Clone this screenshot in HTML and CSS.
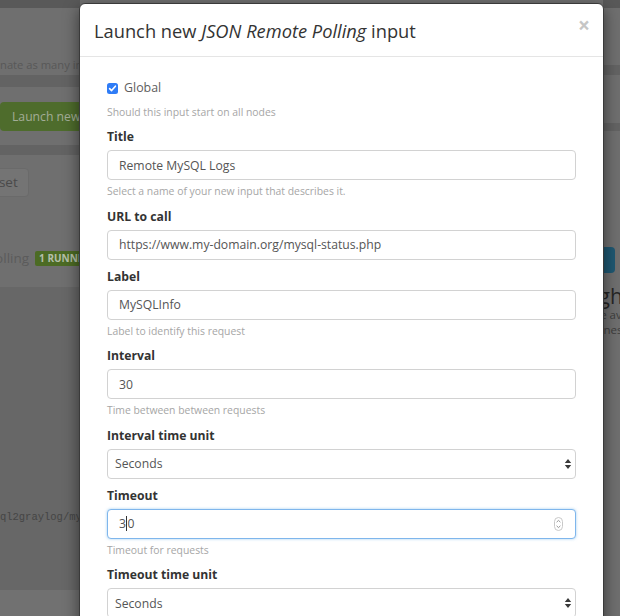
FILE: index.html
```html
<!DOCTYPE html>
<html lang="en">
<head>
<meta charset="utf-8">
<title>Inputs</title>
<link rel="stylesheet" href="styles.css">
</head>
<body>
<div class="page">
  <div class="col-left">
    <div class="nav"></div>
    <div class="box box-intro"><p class="intro-text">terminate as many inputs as you want here.</p></div>
    <div class="gap gap-a"></div>
    <div class="box box-launch"><span class="btn-green">Launch new input</span></div>
    <div class="gap gap-b"></div>
    <div class="box box-list">
      <span class="btn-reset">Reset</span>
      <div class="input-row"><span class="input-name">Polling</span><span class="badge">1 RUNNING</span></div>
    </div>
    <div class="well"><code class="cfg">mysql2graylog/mysql</code></div>
    <div class="foot"></div>
  </div>
  <div class="col-mid"></div>
  <div class="col-right">
    <div class="nav"></div>
    <div class="box box-r1"></div>
    <div class="gap gap-r1"></div>
    <div class="box box-r2"></div>
    <div class="gap gap-r2"></div>
    <div class="box box-r3">
      <span class="btn-blue">Go</span>
      <p class="r-title">Through</p>
      <p class="r-text">the average</p>
      <p class="r-text r-text2">business</p>
    </div>
  </div>
</div>

<div class="modal">
  <div class="modal-header">
    <h2 class="modal-title">Launch new <em>JSON Remote Polling</em> input</h2>
    <span class="close">&times;</span>
  </div>
  <div class="modal-body">
    <div class="check-row">
      <span class="check-box"><svg width="11" height="11" viewBox="0 0 11 11"><path d="M2.6 5.6 L4.6 7.6 L8.4 3.2" fill="none" stroke="#fff" stroke-width="1.6" stroke-linecap="round" stroke-linejoin="round"/></svg></span>
      <span class="check-label">Global</span>
    </div>
    <p class="help help-check">Should this input start on all nodes</p>

    <div class="group">
      <label class="lbl">Title</label>
      <div class="ctl">Remote MySQL Logs</div>
      <p class="help">Select a name of your new input that describes it.</p>
    </div>

    <div class="group">
      <label class="lbl">URL to call</label>
      <div class="ctl">https://www.my-domain.org/mysql-status.php</div>
    </div>

    <div class="group">
      <label class="lbl">Label</label>
      <div class="ctl">MySQLInfo</div>
      <p class="help">Label to identify this request</p>
    </div>

    <div class="group">
      <label class="lbl">Interval</label>
      <div class="ctl">30</div>
      <p class="help">Time between between requests</p>
    </div>

    <div class="group">
      <label class="lbl">Interval time unit</label>
      <div class="ctl ctl-select"><span>Seconds</span>
        <svg class="sel-arrow" width="8" height="12" viewBox="0 0 8 12"><path d="M0.8 5 L4 1 L7.2 5 Z M0.8 7 L4 11 L7.2 7 Z" fill="#3a3a3a"/></svg>
      </div>
    </div>

    <div class="group">
      <label class="lbl">Timeout</label>
      <div class="ctl ctl-focus"><span>3</span><span class="caret"></span><span>0</span>
        <svg class="spin" width="9" height="14" viewBox="0 0 9 14"><rect x="0.5" y="0.5" width="8" height="13" rx="4" fill="#fff" stroke="#c8c8c8"/><path d="M2.6 5.2 L4.5 3.4 L6.4 5.2 M2.6 8.8 L4.5 10.6 L6.4 8.8" fill="none" stroke="#8a8a8a" stroke-width="0.9"/></svg>
      </div>
      <p class="help">Timeout for requests</p>
    </div>

    <div class="group">
      <label class="lbl">Timeout time unit</label>
      <div class="ctl ctl-select"><span>Seconds</span>
        <svg class="sel-arrow" width="8" height="12" viewBox="0 0 8 12"><path d="M0.8 5 L4 1 L7.2 5 Z M0.8 7 L4 11 L7.2 7 Z" fill="#3a3a3a"/></svg>
      </div>
    </div>
  </div>
</div>
</body>
</html>
```

FILE: styles.css
```css
* { box-sizing: border-box; }
html, body { margin: 0; padding: 0; }
body {
  width: 620px;
  height: 616px;
  overflow: hidden;
  position: relative;
  background: #6f6f6f;
  font-family: "Open Sans", "DejaVu Sans", sans-serif;
  color: #333;
}

/* ---------- dimmed page behind the modal ---------- */
.page { display: flex; height: 616px; }
.col-left { width: 80px; flex: none; display: flex; flex-direction: column; overflow: hidden; }
.col-mid { width: 523px; flex: none; }
.col-right { width: 17px; flex: none; display: flex; flex-direction: column; overflow: hidden; }

.nav { height: 8px; background: #595959; flex: none; }
.box { background: #6f6f6f; flex: none; }
.gap { background: #636363; flex: none; }

.box-intro { height: 67px; padding-top: 48px; }
.intro-text {
  margin: 0 0 0 -28px;
  white-space: nowrap;
  font-size: 11.2px;
  line-height: 18px;
  color: #585858;
}
.gap-a { height: 12px; }
.box-launch { height: 58px; padding-top: 15px; }
.btn-green {
  display: inline-block;
  white-space: nowrap;
  height: 29px;
  line-height: 29px;
  padding: 0 12px;
  background: #4e6c2c;
  border-radius: 4px;
  color: #a3ad97;
  font-size: 12.2px;
}
.gap-b { height: 10px; }
.box-list { height: 132px; padding-top: 13px; }
.btn-reset {
  display: inline-block;
  white-space: nowrap;
  height: 29px;
  line-height: 27px;
  margin-left: -27px;
  padding: 0 10px 0 9px;
  background: #747474;
  border: 1px solid #6a6a6a;
  border-radius: 4px;
  color: #4a4a4a;
  font-size: 13.5px;
}
.input-row { display: flex; align-items: center; gap: 6px; margin-top: 51px; margin-left: -13px; white-space: nowrap; }
.input-name { font-size: 13.5px; line-height: 20px; color: #5b5b5b; }
.badge {
  display: inline-block;
  height: 15px;
  line-height: 15px;
  padding: 0 4px;
  background: #4c6b24;
  border-radius: 2px;
  color: #b4bfa8;
  font-size: 10px;
  font-weight: 700;
}
.well { flex: none; height: 303px; background: #676767; padding-top: 222px; }
.cfg {
  display: block;
  margin-left: -19px;
  white-space: nowrap;
  font-family: "Liberation Mono", "DejaVu Sans Mono", monospace;
  font-size: 10.5px;
  line-height: 16px;
  color: #454545;
}
.foot { flex: 1; background: #717171; }

.box-r1 { height: 57px; }
.gap-r1 { height: 10px; }
.box-r2 { height: 48px; }
.gap-r2 { height: 8px; }
.box-r3 { flex: 1; padding-top: 116px; }
.btn-blue {
  display: block;
  width: 32px;
  height: 26px;
  margin-left: -20px;
  background: #1f5872;
  border-radius: 4px;
  color: #1f5872;
  font-size: 12px;
  line-height: 26px;
  text-align: right;
}
.r-title { margin: 12px 0 0 -63px; font-size: 21px; line-height: 22px; color: #262626; white-space: nowrap; }
.r-text { margin: 0 0 0 -14px; font-size: 11.5px; line-height: 15px; color: #3e3e3e; white-space: nowrap; }
.r-text2 { margin: 0 0 0 -22px; }

/* ---------- modal ---------- */
.modal {
  position: absolute;
  left: 79px;
  top: 3px;
  width: 525px;
  height: 640px;
  background: #fff;
  border: 1px solid #3a3a3a;
  border-radius: 6px;
  box-shadow: 0 5px 15px rgba(0, 0, 0, 0.5);
}
.modal-header {
  position: relative;
  padding: 15px 14px 14px;
  border-bottom: 1px solid #e5e5e5;
}
.modal-title {
  margin: 0;
  font-size: 18.3px;
  line-height: 23px;
  font-weight: 400;
  color: #333;
}
.close {
  position: absolute;
  right: 13px;
  top: 8px;
  font-size: 21px;
  line-height: 26px;
  font-weight: 700;
  color: #c6c6c6;
}
.modal-body { padding: 22px 27px 0 27px; }

.check-row { display: flex; align-items: center; gap: 6px; height: 18px; }
.check-box {
  width: 11px;
  height: 11px;
  border-radius: 2.5px;
  background: #2f7cf6;
  display: flex;
}
.check-label { font-size: 12.4px; line-height: 18px; color: #5e5e5e; }

.help {
  margin: 3px 0 8.6px 0;
  font-size: 10.4px;
  line-height: 16px;
  color: #a6a6a6;
}
.help-check { margin-top: 7px; margin-bottom: 8px; }

.group { margin-bottom: 8px; }
.group:has(.help) { margin-bottom: 0; }
.lbl {
  display: block;
  margin-bottom: 4px;
  font-size: 12.2px;
  line-height: 18px;
  font-weight: 700;
  color: #333;
}
.ctl {
  position: relative;
  display: flex;
  align-items: center;
  height: 30px;
  padding: 0 11px;
  border: 1px solid #d2d2d2;
  border-radius: 4px;
  background: #fff;
  font-size: 12.2px;
  color: #555;
  white-space: nowrap;
}
.ctl-select { padding-left: 7px; }
.sel-arrow { position: absolute; right: 3px; top: 8px; }
.ctl-focus {
  border-color: #7fb6ec;
  box-shadow: 0 0 3px rgba(102, 175, 233, 0.6);
}
.caret { display: inline-block; width: 1px; height: 15px; background: #333; margin: 0 0 0 0.5px; }
.spin { position: absolute; right: 12px; top: 7px; }
```
